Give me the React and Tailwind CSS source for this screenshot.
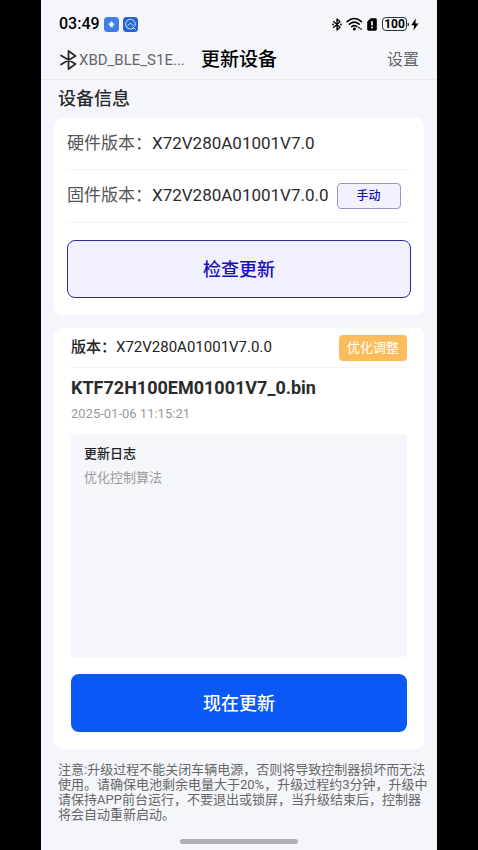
const deviceInfo = {
    name: 'XBD_BLE_S1E...',
    hardware: 'X72V280A01001V7.0',
    firmware: 'X72V280A01001V7.0.0',
};

const release = {
    version: 'X72V280A01001V7.0.0',
    tag: '优化调整',
    file: 'KTF72H100EM01001V7_0.bin',
    date: '2025-01-06 11:15:21',
    log: '优化控制算法',
};

const StatusBar = () => {
    return (
        <div className="flex h-12 items-center justify-between px-[18px] text-black">
            <div className="flex items-center gap-1">
                <span className="text-[16px] font-medium">03:49</span>
                <svg viewBox="0 0 15 15" className="h-[15px] w-[15px]">
                    <rect width="15" height="15" rx="3.5" fill="#3f80e8" />
                    <path d="M7.5 4.6 L10.2 7.4 L8.8 7.9 V9.8 H6.2 V7.9 L4.8 7.4 Z" fill="#fff" stroke="#fff" strokeWidth="0.5" strokeLinejoin="round" />
                </svg>
                <svg viewBox="0 0 15 15" className="h-[15px] w-[15px]">
                    <rect width="15" height="15" rx="3.5" fill="#2563d9" />
                    <path d="M10.4 11.2 A4.9 4.9 0 1 1 12.2 8.6 M9.8 9.8 L12.4 12.2" fill="none" stroke="#dbe8ff" strokeWidth="1" strokeLinecap="round" />
                    <path d="M4.8 8.4 L7.5 6.2 L10.2 8.4" fill="none" stroke="#dbe8ff" strokeWidth="1" strokeLinecap="round" strokeLinejoin="round" />
                </svg>
            </div>
            <div className="flex items-center gap-1">
                {/* bluetooth, connected */}
                <svg viewBox="0 0 10 13" className="h-[13px] w-[10px]">
                    <path d="M1.5 3.6 L8 9.2 L5 12 V1 L8 3.8 L1.5 9.4" fill="none" stroke="currentColor" strokeWidth="1.3" strokeLinejoin="round" strokeLinecap="round" />
                    <circle cx="1" cy="6.5" r="0.9" fill="currentColor" />
                    <circle cx="9" cy="6.5" r="0.9" fill="currentColor" />
                </svg>
                {/* wifi */}
                <svg viewBox="0 0 17 14" className="h-[14px] w-[17px]">
                    <path d="M1.2 4.6 Q8.3 -1.6 15.4 4.6 M3.5 7.2 Q8.3 3.2 13.1 7.2 M5.7 9.6 Q8.3 7.6 10.9 9.6" fill="none" stroke="currentColor" strokeWidth="1.6" strokeLinecap="round" />
                    <circle cx="8.3" cy="11.9" r="1.5" fill="currentColor" />
                    <path d="M13 9.4 L14.4 11.2 H11.6 Z M15 13.1 L13.6 11.4 H16.4 Z" fill="currentColor" />
                </svg>
                {/* sim alert */}
                <svg viewBox="0 0 10 13" className="h-[13px] w-[10px]">
                    <path d="M3.6 0.3 H8.4 Q9.8 0.3 9.8 1.7 V11.3 Q9.8 12.7 8.4 12.7 H1.6 Q0.2 12.7 0.2 11.3 V3.7 Z" fill="currentColor" />
                    <path d="M5 3.2 V7.6 M5 8.8 V10.4" stroke="#f5f6fb" strokeWidth="1.7" />
                </svg>
                <div className="ml-px flex items-center">
                    <span className="flex h-[14px] w-[25px] items-center justify-center rounded-[4px] border border-[#333] text-[12px] leading-none font-bold">
                        100
                    </span>
                    <svg viewBox="0 0 12 13" className="h-[13px] w-[12px]">
                        <path d="M1 5 Q2.2 6.5 1 8 Z" fill="currentColor" stroke="currentColor" strokeWidth="0.6" />
                        <path d="M8.8 0.6 L4.2 7.2 H7.2 L6.4 12.4 L11.6 5.6 H8.4 Z" fill="currentColor" />
                    </svg>
                </div>
            </div>
        </div>
    );
};

const BluetoothIcon = () => {
    return (
        <svg viewBox="0 0 20 22" className="h-[22px] w-5 shrink-0 text-[#2b2b2b]">
            <path
                d="M2 6.5 L16.5 15 L9.5 20 V2 L16.5 7 L2 15.5"
                fill="none"
                stroke="currentColor"
                strokeWidth="1.8"
                strokeLinejoin="round"
                strokeLinecap="round"
            />
        </svg>
    );
};

const Header = () => {
    return (
        <header className="flex h-8 items-start border-b border-[#e9eaee] px-[18px]">
            <div className="flex h-6 flex-1 items-center text-[#666]">
                <BluetoothIcon />
                <span className="text-[15px] whitespace-nowrap">{deviceInfo.name}</span>
            </div>
            <h1 className="text-[19px] leading-6 font-medium text-black">更新设备</h1>
            <div className="flex h-6 flex-1 items-center justify-end">
                <a href="#settings" className="text-[16px] text-[#666]">设置</a>
            </div>
        </header>
    );
};

const DeviceCard = () => {
    return (
        <section className="rounded-lg bg-white px-[13px] pb-[17px]">
            <div className="flex h-[52px] items-center border-b border-[#f5f5f7] text-[17px]">
                <span className="text-[#555]">硬件版本：</span>
                <span className="text-[#2b2b2b]">{deviceInfo.hardware}</span>
            </div>
            <div className="flex h-[53px] items-center border-b border-[#f5f5f7] text-[17px]">
                <span className="text-[#555]">固件版本：</span>
                <span className="text-[#2b2b2b]">{deviceInfo.firmware}</span>
                <button className="ml-2 h-[26px] w-16 rounded-[4px] border border-[#9a94c4] bg-[#f1f2fd] text-[12px] font-medium text-[#1a0fb4]">
                    手动
                </button>
            </div>
            <button className="mt-[17px] h-[58px] w-full rounded-lg border border-[#2f2a9c] bg-[#f0f1fc] text-[18px] font-medium text-[#1a10c0]">
                检查更新
            </button>
        </section>
    );
};

const ReleaseCard = () => {
    return (
        <section className="mt-[13px] rounded-lg bg-white px-[17px] pb-[17px]">
            <div className="flex h-10 items-center justify-between border-b border-[#f5f5f7] text-[15px] text-[#222]">
                <div className="flex items-center">
                    <span className="font-medium">版本：</span>
                    <span>{release.version}</span>
                </div>
                <span className="flex h-[26px] items-center rounded-[4px] bg-[#fdbc5c] px-2 text-[13px] text-white">
                    {release.tag}
                </span>
            </div>
            <h3 className="mt-1.5 text-[18px] leading-7 font-bold text-[#2b2b2b]">{release.file}</h3>
            <p className="mt-0.5 text-[13px] leading-5 text-[#999]">{release.date}</p>
            <div className="mt-2.5 min-h-[223px] rounded-[4px] bg-[#f5f6fb] px-[13px] py-2 text-[13px]">
                <h4 className="leading-6 font-medium text-[#222]">更新日志</h4>
                <p className="leading-6 text-[#999]">{release.log}</p>
            </div>
            <button className="mt-[17px] h-[58px] w-full rounded-lg bg-[#0a59f7] text-[18px] font-medium text-white">
                现在更新
            </button>
        </section>
    );
};

const App = () => {
    return (
        <div lang="zh-CN" className="flex min-h-screen justify-center bg-black font-[Roboto,'Noto_Sans_CJK_SC',sans-serif]">
            <div className="flex w-full max-w-[396px] flex-col bg-[#f5f6fb]">
                <StatusBar />
                <Header />
                <main className="px-[13px]">
                    <h2 className="pl-1 text-[18px] leading-[38px] font-medium text-[#2b2b2b]">设备信息</h2>
                    <DeviceCard />
                    <ReleaseCard />
                    <p className="mt-[13px] pl-1 text-[13px] leading-[15px] whitespace-nowrap text-[#666]">
                        注意:升级过程不能关闭车辆电源，否则将导致控制器损坏而无法<br />
                        使用。请确保电池剩余电量大于20%，升级过程约3分钟，升级中<br />
                        请保持APP前台运行，不要退出或锁屏，当升级结束后，控制器<br />
                        将会自动重新启动。
                    </p>
                </main>
                <div className="mx-auto mt-auto mb-1.5 h-[5px] w-[118px] rounded-full bg-[#aeafb3]" />
            </div>
        </div>
    );
};

export default App;
